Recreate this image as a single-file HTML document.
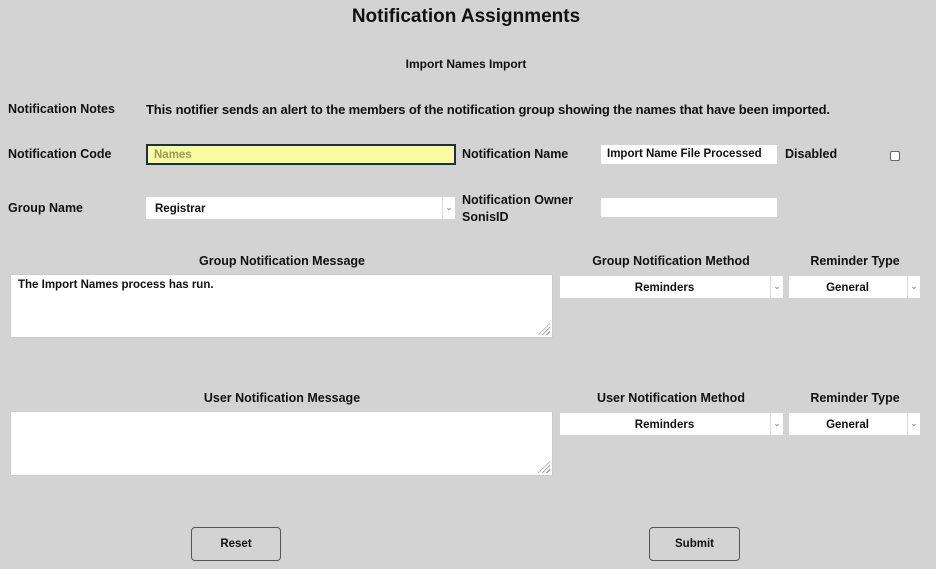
<!DOCTYPE html>
<html><head><style>
body{margin:0;width:936px;height:569px;background:#d3d3d3;font-family:"Liberation Sans",sans-serif;font-weight:bold;color:#111;position:relative;overflow:hidden}
.a{position:absolute;white-space:nowrap}
.l{font-size:12.5px}
.box{position:absolute;background:#fff;box-sizing:border-box}
.sel{position:absolute;background:#fff;font-size:11.5px;box-sizing:border-box}
.sel .arr{position:absolute;right:0;top:0;bottom:0;width:12px;border-left:1px solid #ddd;color:#999;font-size:8px;text-align:center;line-height:22px}
.btn{position:absolute;border:1px solid #555;border-radius:4px;font-size:11.5px;text-align:center;box-sizing:border-box;line-height:32px}
.c{text-align:center;transform:translateX(-50%)}
.grip{position:absolute;right:2px;bottom:2px;width:12px;height:12px;background:repeating-linear-gradient(135deg,transparent 0 2px,#888 2px 3px);clip-path:polygon(100% 0,100% 100%,0 100%)}
</style></head><body>
<div class="a c" style="left:466px;top:6px;font-size:19px">Notification Assignments</div>
<div class="a c" style="left:466px;top:57px;font-size:12px">Import Names Import</div>
<div class="a l" style="left:8px;top:102px">Notification Notes</div>
<div class="a" style="left:146px;top:102px;font-size:13px;letter-spacing:-0.15px">This notifier sends an alert to the members of the notification group showing the names that have been imported.</div>

<div class="a l" style="left:8px;top:147px">Notification Code</div>
<div class="box" style="left:146px;top:144px;width:310px;height:21px;background:#f8fba2;border:2px solid #1f2d4a;font-size:11.5px;color:#999a5a;padding:3px 6px;font-weight:bold">Names</div>
<div class="a l" style="left:462px;top:147px">Notification Name</div>
<div class="box" style="left:601px;top:145px;width:176px;height:19px;font-size:11.5px;padding:3px 6px">Import Name File Processed</div>
<div class="a l" style="left:785px;top:147px">Disabled</div>
<div class="box" style="left:890px;top:151px;width:10px;height:10px;border:1px solid #666;border-radius:2px"></div>

<div class="a l" style="left:8px;top:201px">Group Name</div>
<div class="sel" style="left:146px;top:197px;width:309px;height:22px;padding:6px 9px">Registrar<span class="arr">&#8964;</span></div>
<div class="a l" style="left:462px;top:192px;line-height:17px">Notification Owner<br>SonisID</div>
<div class="box" style="left:601px;top:198px;width:176px;height:19px"></div>

<div class="a l c" style="left:282px;top:254px">Group Notification Message</div>
<div class="a l c" style="left:671px;top:254px">Group Notification Method</div>
<div class="a l c" style="left:855px;top:254px">Reminder Type</div>
<div class="box" style="left:10px;top:274px;width:543px;height:64px;font-size:11.5px;padding:4px 7px;border:1px solid #ccc">The Import Names process has run.<div class="grip"></div></div>
<div class="sel" style="left:560px;top:276px;width:223px;height:22px;text-align:center;padding:6px 14px 0 0">Reminders<span class="arr">&#8964;</span></div>
<div class="sel" style="left:789px;top:276px;width:131px;height:22px;text-align:center;padding:6px 14px 0 0">General<span class="arr">&#8964;</span></div>

<div class="a l c" style="left:282px;top:391px">User Notification Message</div>
<div class="a l c" style="left:671px;top:391px">User Notification Method</div>
<div class="a l c" style="left:855px;top:391px">Reminder Type</div>
<div class="box" style="left:10px;top:411px;width:543px;height:65px;border:1px solid #ccc"><div class="grip"></div></div>
<div class="sel" style="left:560px;top:413px;width:223px;height:22px;text-align:center;padding:6px 14px 0 0">Reminders<span class="arr">&#8964;</span></div>
<div class="sel" style="left:789px;top:413px;width:131px;height:22px;text-align:center;padding:6px 14px 0 0">General<span class="arr">&#8964;</span></div>

<div class="btn" style="left:191px;top:527px;width:90px;height:34px">Reset</div>
<div class="btn" style="left:649px;top:527px;width:91px;height:34px">Submit</div>
</body></html>
